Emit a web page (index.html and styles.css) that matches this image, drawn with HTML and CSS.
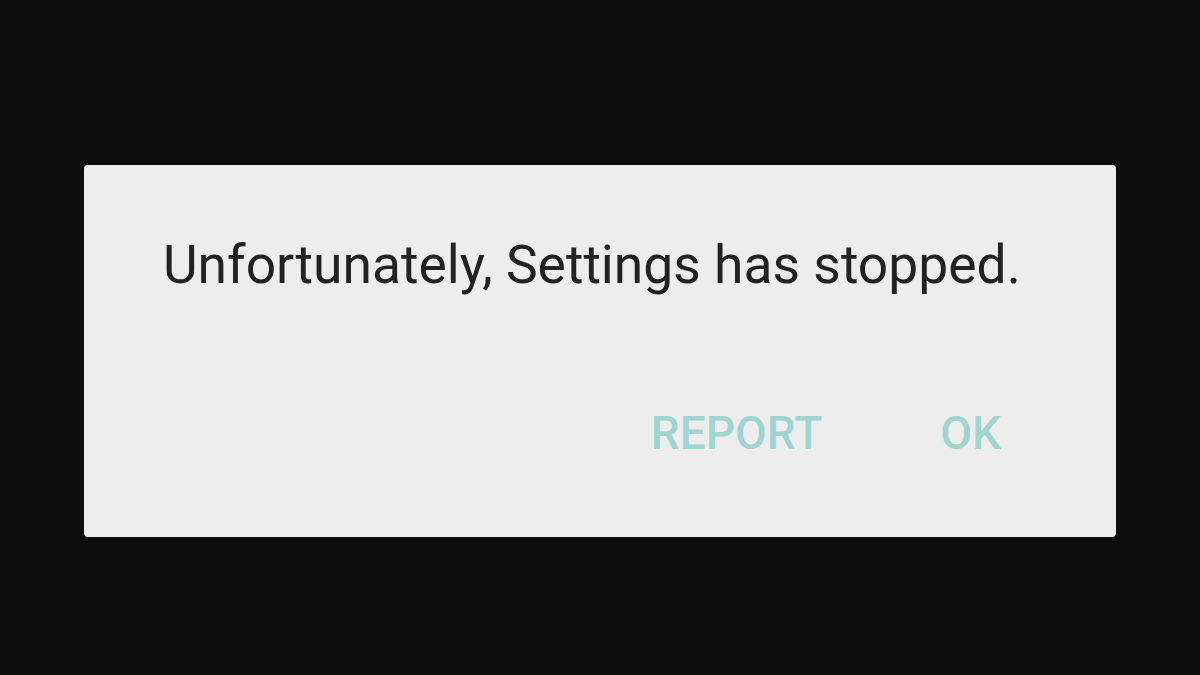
FILE: index.html
```html
<!DOCTYPE html>
<html>
<head>
<meta charset="utf-8">
<link rel="stylesheet" href="styles.css">
</head>
<body>
<div class="screen">
  <div class="dialog">
    <p class="message">Unfortunately, Settings has stopped.</p>
    <div class="actions">
      <span class="btn report">REPORT</span>
      <span class="btn ok">OK</span>
    </div>
  </div>
</div>
</body>
</html>
```
FILE: styles.css
```css
html, body {
  margin: 0;
  padding: 0;
  background: #0c0c0c;
}
.screen {
  width: 1200px;
  height: 675px;
  box-sizing: border-box;
  padding: 165px 84px 0 84px;
  font-family: Roboto, "Noto Sans", sans-serif;
}
.dialog {
  width: 1032px;
  height: 372px;
  box-sizing: border-box;
  background: #ededed;
  border-radius: 4px;
  padding: 65px 0 0 79px;
}
.message {
  margin: 0;
  font-size: 53.4px;
  line-height: 70px;
  color: #222222;
  font-weight: 400;
}
.actions {
  display: flex;
  justify-content: flex-end;
  gap: 118px;
  padding: 108px 115px 0 0;
}
.btn {
  font-size: 46px;
  line-height: 50px;
  font-weight: 500;
  color: #9fd4cf;
}
```
